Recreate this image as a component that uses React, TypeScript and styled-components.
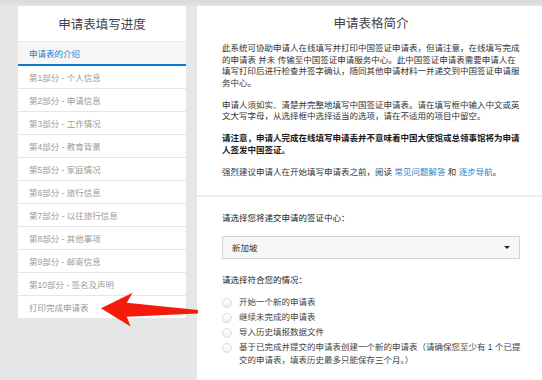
import styled, { createGlobalStyle } from "styled-components";

const GlobalStyle = createGlobalStyle`
  html, body {
    margin: 0;
    padding: 0;
    background: #e6e6e6;
  }

  *,
  *::before,
  *::after {
    box-sizing: border-box;
  }

  body {
    font-family: "Liberation Sans", "Noto Sans CJK SC", sans-serif;
    color: #333;
  }
`;

const Page = styled.div`
  position: relative;
  width: 542px;
  height: 380px;
  overflow: hidden;
  display: flex;
  flex-direction: column;
`;

const TopStrip = styled.div`
  height: 6px;
  background: linear-gradient(#d9d9d9, #e4e4e4);
`;

const Columns = styled.div`
  flex: 1;
  display: flex;
  align-items: flex-start;
  gap: 11px;
  padding-left: 18px;
`;

const Sidebar = styled.nav`
  width: 168px;
  flex-shrink: 0;
  background: #fff;
`;

const SidebarTitle = styled.div`
  height: 36px;
  display: flex;
  align-items: center;
  justify-content: center;
  font-size: 12.5px;
  color: #444;
  border-bottom: 1px solid #ececec;
`;

const MenuItem = styled.div<{ $active?: boolean }>`
  height: ${(p) => (p.$active ? "24px" : "23px")};
  display: flex;
  align-items: center;
  padding-left: 11px;
  font-size: 8.5px;
  color: ${(p) => (p.$active ? "#1b80d2" : "#9a9a9a")};
  background: ${(p) => (p.$active ? "#f6f6f6" : "#fff")};
  border-bottom: ${(p) => (p.$active ? "2px solid #0a7bd5" : "1px solid #e6e6e6")};
`;

const Main = styled.main`
  width: 345px;
  flex-shrink: 0;
  min-height: 374px;
  background: #fff;
`;

const Intro = styled.section`
  padding: 10px 22px 17px 25px;
  border-bottom: 2px solid #ececec;
`;

const Title = styled.h2`
  margin: 0 0 11px;
  font-size: 12.5px;
  line-height: 16px;
  font-weight: normal;
  color: #444;
  text-align: center;
`;

const Para = styled.p<{ $bold?: boolean }>`
  margin: 0 0 10.5px;
  font-size: 8.5px;
  line-height: 11.5px;
  color: ${(p) => (p.$bold ? "#1a1a1a" : "#333")};
  font-weight: ${(p) => (p.$bold ? "bold" : "normal")};

  &:last-child {
    margin-bottom: 0;
  }
`;

const Link = styled.a`
  color: #2c7fd0;
  text-decoration: none;
`;

const Form = styled.section`
  padding: 16px 21px 0 25px;
`;

const Label = styled.div`
  font-size: 8.5px;
  line-height: 11.5px;
  color: #222;
`;

const Select = styled.div`
  margin: 11px 1px 16px 0;
  height: 23px;
  display: flex;
  align-items: center;
  justify-content: space-between;
  padding: 0 9px;
  background: #f7f7f7;
  border: 1px solid #d6d6d6;
  font-size: 8.5px;
  color: #333;
`;

const Caret = styled.span`
  width: 0;
  height: 0;
  border-left: 3px solid transparent;
  border-right: 3px solid transparent;
  border-top: 3.5px solid #222;
`;

const Options = styled.div`
  margin-top: 10px;
  display: flex;
  flex-direction: column;
  gap: 2px;
`;

const Option = styled.label`
  display: flex;
  align-items: flex-start;
  gap: 7px;
  font-size: 8.5px;
  line-height: 13px;
  color: #444;
`;

const Radio = styled.span`
  flex-shrink: 0;
  width: 10px;
  height: 10px;
  margin-top: 1.5px;
  border-radius: 50%;
  border: 1px solid #dcdcdc;
  background: linear-gradient(#fff, #f0f0f0);
`;

const Arrow = styled.svg`
  position: absolute;
  left: 100px;
  top: 291px;
`;

const steps = [
  "第1部分 - 个人信息",
  "第2部分 - 申请信息",
  "第3部分 - 工作情况",
  "第4部分 - 教育背景",
  "第5部分 - 家庭情况",
  "第6部分 - 旅行信息",
  "第7部分 - 以往旅行信息",
  "第8部分 - 其他事项",
  "第9部分 - 邮寄信息",
  "第10部分 - 签名及声明",
  "打印完成申请表",
];

const choices = [
  "开始一个新的申请表",
  "继续未完成的申请表",
  "导入历史填报数据文件",
  "基于已完成并提交的申请表创建一个新的申请表（请确保您至少有 1 个已提交的申请表，填表历史最多只能保存三个月。）",
];

export default function App() {
  return (
    <Page>
      <GlobalStyle />
      <TopStrip />
      <Columns>
        <Sidebar>
          <SidebarTitle>申请表填写进度</SidebarTitle>
          <MenuItem $active>申请表的介绍</MenuItem>
          {steps.map((s) => (
            <MenuItem key={s}>{s}</MenuItem>
          ))}
        </Sidebar>
        <Main>
          <Intro>
            <Title>申请表格简介</Title>
            <Para>
              此系统可协助申请人在线填写并打印中国签证申请表，但请注意，在线填写完成的申请表 并未 传输至中国签证申请服务中心。此中国签证申请表需要申请人在填写打印后进行检查并签字确认，随同其他申请材料一并递交到中国签证申请服务中心。
            </Para>
            <Para>
              申请人须如实、清楚并完整地填写中国签证申请表。请在填写框中输入中文或英文大写字母，从选择框中选择适当的选项，请在不适用的项目中留空。
            </Para>
            <Para $bold>
              请注意，申请人完成在线填写申请表并不意味着中国大使馆或总领事馆将为申请人签发中国签证。
            </Para>
            <Para>
              强烈建议申请人在开始填写申请表之前，阅读 <Link>常见问题解答</Link> 和 <Link>逐步导航</Link>。
            </Para>
          </Intro>
          <Form>
            <Label>请选择您将递交申请的签证中心：</Label>
            <Select>
              <span>新加坡</span>
              <Caret />
            </Select>
            <Label>请选择符合您的情况：</Label>
            <Options>
              {choices.map((c) => (
                <Option key={c}>
                  <Radio />
                  <span>{c}</span>
                </Option>
              ))}
            </Options>
          </Form>
        </Main>
      </Columns>
      <Arrow width="100" height="37" viewBox="0 0 100 37">
        <polygon
          points="1,17.3 32.7,1.7 26.7,11.7 98,19 98,22.5 26.7,25.7 30.5,35.5"
          fill="#f41b0c"
        />
      </Arrow>
    </Page>
  );
}
